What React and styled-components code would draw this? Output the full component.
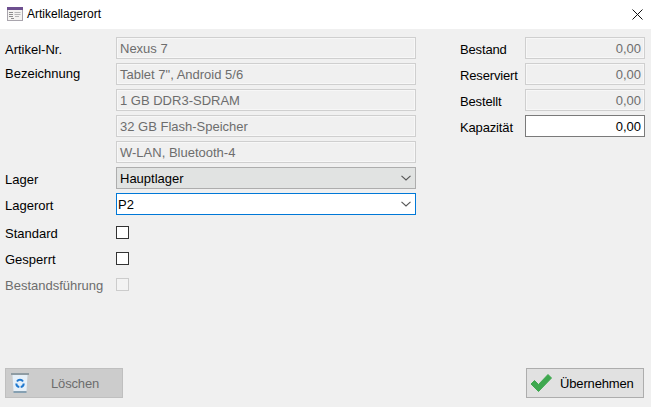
import React from "react"
import styled, { createGlobalStyle } from "styled-components"

const GlobalStyle = createGlobalStyle`
  html, body {
    margin: 0;
    padding: 0;
    background: #f0f0f0;
  }
  * {
    box-sizing: border-box;
  }
`

const WindowIcon = () => (
  <svg width="16" height="16" viewBox="0 0 16 16">
    <rect x="0.5" y="1.500" width="15" height="13" fill="#f4f3f1" stroke="#a9a5ad" />
    <rect x="0" y="1" width="16" height="3" fill="#6d4f8f" />
    <path d="M2 6.500h4M2 8.500h4M2 10.500h4M4 12.500h3" stroke="#8d8d8d" />
    <path d="M7.500 6.500h6M7.500 8.500h6M8 10.500h4" stroke="#b5b5b5" />
  </svg>
)

const CloseIcon = () => (
  <svg width="11" height="11" viewBox="0 0 11 11">
    <path d="M.5.5l10 10M10.500.5l-10 10" stroke="#111" strokeWidth="1" fill="none" />
  </svg>
)

const Chevron = () => (
  <svg width="10" height="6" viewBox="0 0 10 6">
    <path d="M.5.8L5 5 9.500.8" stroke="#555" strokeWidth="1.100" fill="none" />
  </svg>
)

const BinIcon = () => (
  <svg width="18" height="20" viewBox="0 0 18 20">
    <rect x="0" y="0" width="18" height="2" fill="#8f9ca3" />
    <path d="M1.500 2h15l-1 16h-13z" fill="#e6f0f9" />
    <rect x="2.500" y="18" width="13" height="2" fill="#86a0b2" />
    <path d="M6 8.500a3.500 3.500 0 0 1 6 0" stroke="#1f78cf" strokeWidth="2" fill="none" />
    <path d="M12.700 10.500a3.500 3.500 0 0 1-3 3.500" stroke="#1f78cf" strokeWidth="2" fill="none" />
    <path d="M8.300 14a3.500 3.500 0 0 1-3-3.500" stroke="#1f78cf" strokeWidth="2" fill="none" />
  </svg>
)

const CheckIcon = () => (
  <svg width="22" height="20" viewBox="0 0 22 20">
    <path d="M1 11l3.500-3.500 4 4L18 1.500l3.500 3.500L8.500 18.500z" fill="#3ea84f" stroke="#3ea84f" strokeLinejoin="round" />
  </svg>
)

const artikelRows = [
  { label: "Artikel-Nr.", value: "Nexus 7" },
  { label: "Bezeichnung", value: 'Tablet 7", Android 5/6', raised: true },
  { label: "", value: "1 GB DDR3-SDRAM" },
  { label: "", value: "32 GB Flash-Speicher" },
  { label: "", value: "W-LAN, Bluetooth-4" },
]

const mengen = [
  { label: "Bestand", value: "0,00" },
  { label: "Reserviert", value: "0,00" },
  { label: "Bestellt", value: "0,00" },
  { label: "Kapazität", value: "0,00", active: true },
]

const checks = [
  { label: "Standard" },
  { label: "Gesperrt" },
  { label: "Bestandsführung", disabled: true },
]

export default function App() {
  return (
    <Page>
      <GlobalStyle />
      <TitleBar>
        <TitleLeft>
          <WindowIcon />
          <Title>Artikellagerort</Title>
        </TitleLeft>
        <CloseIcon />
      </TitleBar>
      <Body>
        <Column>
          {artikelRows.map((row, i) => (
            <Row key={i}>
              <Label $width={111} $raised={row.raised}>{row.label}</Label>
              <ReadOnlyField $width={300}>{row.value}</ReadOnlyField>
            </Row>
          ))}
          <Row>
            <Label $width={111}>Lager</Label>
            <Select>
              Hauptlager
              <Chevron />
            </Select>
          </Row>
          <Row>
            <Label $width={111}>Lagerort</Label>
            <Select $focused>
              P2
              <Chevron />
            </Select>
          </Row>
          <CheckGroup>
            {checks.map((check) => (
              <Row key={check.label}>
                <CheckLabel $width={111} $disabled={check.disabled}>{check.label}</CheckLabel>
                <CheckBox $disabled={check.disabled} />
              </Row>
            ))}
          </CheckGroup>
        </Column>
        <Column>
          {mengen.map((row) =>
            <Row key={row.label}>
              <Label $width={65} $tight>{row.label}</Label>
              {row.active
                ? <NumberInput>{row.value}</NumberInput>
                : <ReadOnlyField $width={120} $number>{row.value}</ReadOnlyField>}
            </Row>
          )}
        </Column>
      </Body>
      <Footer>
        <DisabledButton>
          <BinIcon />
          <ButtonText>Löschen</ButtonText>
        </DisabledButton>
        <ApplyButton>
          <CheckIcon />
          <ButtonText>Übernehmen</ButtonText>
        </ApplyButton>
      </Footer>
    </Page>
  )
}

const Page = styled.div`
  width: 651px;
  height: 407px;
  display: flex;
  flex-direction: column;
  overflow: hidden;
  background: #f0f0f0;
  color: #000;
  font-family: "Liberation Sans", Arial, sans-serif;
  font-size: 13px;
`

const TitleBar = styled.div`
  height: 29px;
  flex: none;
  display: flex;
  align-items: center;
  justify-content: space-between;
  padding: 0 8px 1px 7px;
  background: #fff;
`

const TitleLeft = styled.div`
  display: flex;
  align-items: center;
  gap: 4px;
`

const Title = styled.span`
  font-size: 12px;
`

const Body = styled.div`
  flex: 1;
  display: flex;
  justify-content: space-between;
  padding: 8px 6px 0 5px;
`

const Column = styled.div`
  display: flex;
  flex-direction: column;
  gap: 4px;
`

const Row = styled.div`
  height: 22px;
  display: flex;
  align-items: center;
`

const Label = styled.div`
  width: ${(props) => props.$width}px;
  flex: none;
  padding: ${(props) => (props.$raised ? "0 0 2px" : "2px 0 0")};
  letter-spacing: ${(props) => (props.$tight ? "-0.15px" : "0")};
  white-space: nowrap;
  color: ${(props) => (props.$disabled ? "#6d6d6d" : "#000")};
`

const CheckLabel = styled(Label)`
  padding: 0;
`

const ReadOnlyField = styled.div`
  width: ${(props) => props.$width}px;
  height: 22px;
  display: flex;
  align-items: center;
  justify-content: ${(props) => (props.$number ? "flex-end" : "flex-start")};
  padding: ${(props) => (props.$number ? "0 3px 0 0" : "0 0 0 3px")};
  background: #f0f0f0;
  border: 1px solid #cfcfcf;
  box-shadow: inset 0 0 0 1px #f7f7f7;
  color: #6d6d6d;
`

const NumberInput = styled.div`
  width: 120px;
  height: 22px;
  display: flex;
  align-items: center;
  justify-content: flex-end;
  padding-right: 3px;
  background: #fff;
  border: 1px solid #7a7a7a;
`

const Select = styled.div`
  width: 300px;
  height: 22px;
  display: flex;
  align-items: center;
  justify-content: space-between;
  padding: 0 4px 0 ${(props) => (props.$focused ? "1px" : "3px")};
  background: ${(props) => (props.$focused ? "#fff" : "#e1e3e2")};
  border: 1px solid ${(props) => (props.$focused ? "#0078d7" : "#adadad")};
`

const CheckGroup = styled.div`
  display: flex;
  flex-direction: column;
  gap: 4px;
  margin-top: 3px;
`

const CheckBox = styled.div`
  width: 13px;
  height: 13px;
  margin-top: -1px;
  background: ${(props) => (props.$disabled ? "#f3f3f3" : "#fff")};
  border: 1px solid ${(props) => (props.$disabled ? "#cccccc" : "#333")};
`

const Footer = styled.div`
  flex: none;
  display: flex;
  justify-content: space-between;
  padding: 0 7px 9px 5px;
`

const DisabledButton = styled.div`
  width: 118px;
  height: 30px;
  display: flex;
  align-items: center;
  gap: 22px;
  padding-left: 5px;
  background: #cccccc;
  border: 1px solid #bfbfbf;
  color: #6d6d6d;
`

const ApplyButton = styled.div`
  width: 118px;
  height: 30px;
  display: flex;
  align-items: center;
  gap: 8px;
  padding-left: 3px;
  background: #e1e1e1;
  border: 1px solid #adadad;
`

const ButtonText = styled.span`
  white-space: nowrap;
  letter-spacing: -0.15px;
`
